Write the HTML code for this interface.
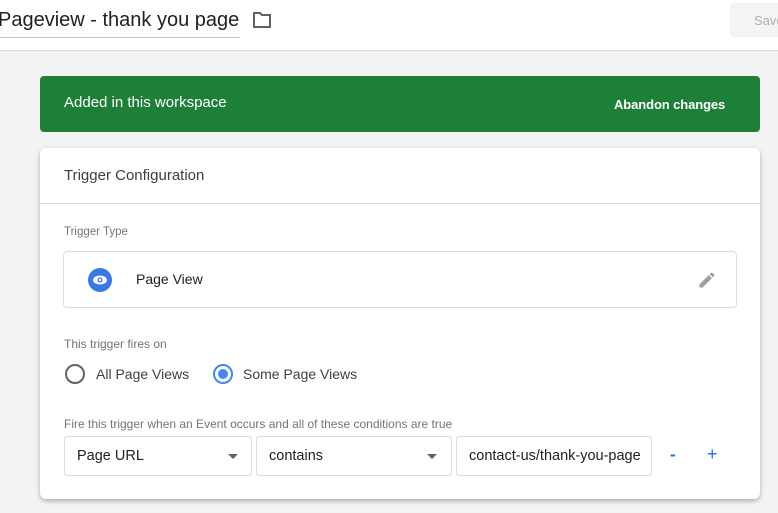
<!DOCTYPE html>
<html><head><style>
*{margin:0;padding:0;box-sizing:border-box}
body{width:778px;height:513px;overflow:hidden;background:#f1f3f4;font-family:"Liberation Sans",sans-serif;position:relative}
.a{position:absolute}
</style></head><body>
<div class="a" style="left:0;top:0;width:778px;height:51px;background:#fff;border-bottom:1px solid #dadce0"></div>
<div class="a" style="left:-2px;top:9px;font-size:20px;color:#202124;white-space:nowrap">Pageview - thank you page</div>
<div class="a" style="left:0;top:37px;width:240px;height:1px;background:#c8c8c8"></div>
<svg class="a" style="left:252px;top:11px" width="20" height="18" viewBox="0 0 20 18"><path d="M2 2h6l2 2h8v12H2z" fill="none" stroke="#5f6368" stroke-width="2"/></svg>
<div class="a" style="left:730px;top:3px;width:60px;height:34px;background:#f4f4f4;border-radius:3px;color:#b0b0b0;font-size:13px;padding:10px 0 0 24px">Save</div>
<div class="a" style="left:40px;top:76px;width:720px;height:56px;background:#1e8038;border-radius:4px"></div>
<div class="a" style="left:64px;top:94px;color:#fff;font-size:15px">Added in this workspace</div>
<div class="a" style="left:614px;top:97px;color:#fff;font-size:13px;font-weight:bold;letter-spacing:-0.1px">Abandon changes</div>
<div class="a" style="left:40px;top:148px;width:720px;height:351px;background:#fff;border-radius:6px;box-shadow:0 2px 5px rgba(0,0,0,.3)"></div>
<div class="a" style="left:64px;top:167px;font-size:15px;color:#3c4043">Trigger Configuration</div>
<div class="a" style="left:40px;top:203px;width:720px;height:1px;background:#dadce0"></div>
<div class="a" style="left:64px;top:226px;font-size:11.5px;color:#70757a">Trigger Type</div>
<div class="a" style="left:63px;top:251px;width:674px;height:57px;border:1px solid #dadce0;border-radius:4px"></div>
<svg class="a" style="left:88px;top:268px" width="24" height="24" viewBox="0 0 24 24"><circle cx="12" cy="12" r="12" fill="#3b78e7"/><ellipse cx="12" cy="12" rx="7" ry="4.5" fill="#fff"/><circle cx="12" cy="12" r="2.5" fill="#3b78e7"/><circle cx="12" cy="12" r="1.2" fill="#fff"/></svg>
<div class="a" style="left:136px;top:271px;font-size:14px;color:#202124">Page View</div>
<svg class="a" style="left:697px;top:270px" width="20" height="20" viewBox="0 0 24 24"><path d="M3 17.25V21h3.75L17.81 9.94l-3.75-3.75L3 17.25zM20.71 7.04a1 1 0 000-1.41l-2.34-2.34a1 1 0 00-1.41 0l-1.83 1.83 3.75 3.75 1.83-1.83z" fill="#9aa0a6"/></svg>
<div class="a" style="left:64px;top:337px;font-size:12px;color:#70757a">This trigger fires on</div>
<div class="a" style="left:65px;top:364px;width:20px;height:20px;border:2px solid #5f6368;border-radius:50%"></div>
<div class="a" style="left:96px;top:366px;font-size:14px;color:#3c4043">All Page Views</div>
<div class="a" style="left:213px;top:364px;width:20px;height:20px;border:2px solid #4285f4;border-radius:50%"><div style="margin:3px;width:10px;height:10px;border-radius:50%;background:#4285f4"></div></div>
<div class="a" style="left:243px;top:366px;font-size:14px;color:#3c4043">Some Page Views</div>
<div class="a" style="left:64px;top:417px;font-size:12px;color:#70757a">Fire this trigger when an Event occurs and all of these conditions are true</div>
<div class="a" style="left:64px;top:436px;width:188px;height:40px;border:1px solid #dadce0;border-radius:3px;font-size:14.5px;color:#202124;padding:11px 0 0 12px">Page URL</div>
<div class="a" style="left:228px;top:454px;border:5px solid transparent;border-top-color:#5f6368"></div>
<div class="a" style="left:256px;top:436px;width:196px;height:40px;border:1px solid #dadce0;border-radius:3px;font-size:14.5px;color:#202124;padding:11px 0 0 12px">contains</div>
<div class="a" style="left:427px;top:454px;border:5px solid transparent;border-top-color:#5f6368"></div>
<div class="a" style="left:456px;top:436px;width:196px;height:40px;border:1px solid #dadce0;border-radius:3px;font-size:14.5px;color:#202124;padding:11px 0 0 12px;overflow:hidden;white-space:nowrap"><span style="display:block;width:178px;overflow:hidden">contact-us/thank-you-page</span></div>
<div class="a" style="left:670px;top:445px;font-size:17px;color:#1a73e8;font-weight:bold">-</div>
<div class="a" style="left:707px;top:444px;font-size:18px;color:#1a73e8">+</div>
</body></html>
